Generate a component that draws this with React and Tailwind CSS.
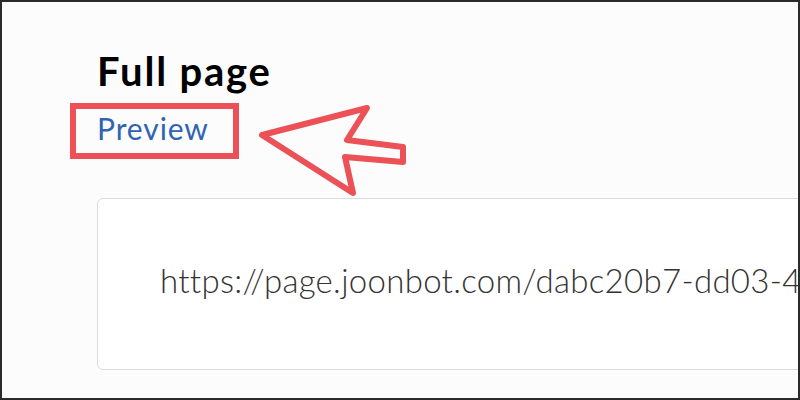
import React from "react";

export default function App() {
  return (
    <div className="w-[800px] h-[400px] border-2 border-[#2b2b2b] bg-[#fcfcfc] overflow-hidden relative" style={{ fontFamily: "Lato, 'Open Sans', sans-serif" }}>
      <div className="pl-[95px] pt-[47px]">
        <h1 className="text-[40px] leading-[44px] font-bold text-black tracking-[1.8px]">Full page</h1>
        <div className="mt-[15px] text-[30px] leading-[40px] text-[#2f64b5] tracking-[0.9px]">Preview</div>
        <div className="mt-[50px] w-[760px] h-[172px] rounded-md border border-[#dcdcdc] bg-white flex items-center pl-[62px]">
          <span className="text-[33px] leading-[40px] pb-[8px] font-light text-[#333] whitespace-nowrap tracking-[0.3px]">https://page.joonbot.com/dabc20b7-dd03-4a1c-9f2e</span>
        </div>
      </div>
      <div className="absolute left-[68px] top-[101px] w-[169px] h-[56px] border-[6px] border-[#ec5158]"></div>
      <svg className="absolute left-[-2px] top-[-2px]" width="800" height="400" viewBox="0 0 800 400">
        <path d="M262 135 L367 108 L347 140 L403 147 L403 162 L345 157 L353 193 Z" fill="none" stroke="#ec5158" strokeWidth="6" strokeLinejoin="round" />
      </svg>
    </div>
  );
}
